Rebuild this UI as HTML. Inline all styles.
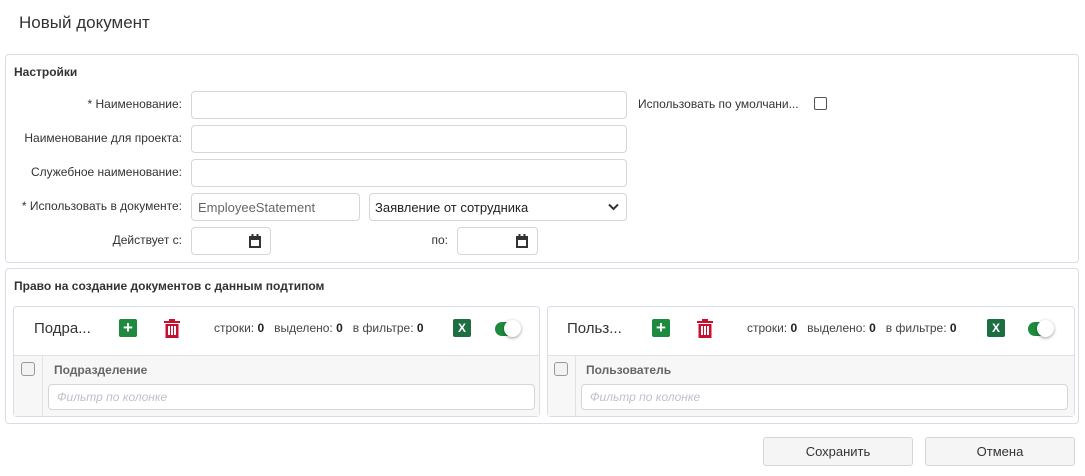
<!DOCTYPE html>
<html><head><meta charset="utf-8"><style>
*{box-sizing:border-box;margin:0;padding:0}
body{width:1085px;height:476px;background:#fff;font-family:"Liberation Sans","Noto Sans CJK SC",sans-serif;color:#333;position:relative;overflow:hidden;font-size:12px}
.a{position:absolute}
.box{position:absolute;border:1px solid #dcdce6;border-radius:4px}
.lbl{position:absolute;text-align:right;width:180px;left:2px;font-size:12px;color:#333}
.inp{position:absolute;border:1px solid #d6d6d6;border-radius:4px;height:28px;background:#fff}
.sec{font-weight:bold;font-size:12px;color:#333}
.btn{position:absolute;width:18px;height:18px;border-radius:2px;color:#fff;text-align:center;font-weight:bold}
.stats{position:absolute;font-size:12px;color:#444;white-space:nowrap}
.stats b{color:#222}
.tog{position:absolute;width:25px;height:14px;border-radius:7px;background:#1e8a3e}
.tog:after{content:"";position:absolute;right:-1px;top:-2px;width:17px;height:17px;border-radius:50%;background:#fff;box-shadow:0 1px 3px rgba(0,0,0,.4)}
.thead{position:absolute;background:#f7f7f7;border-top:1px solid #e2e2e2}
.cb{position:absolute;width:14px;height:14px;border:1px solid #999;border-radius:3px;background:#f2f2f2}
.fbtn{position:absolute;width:150px;height:29px;border:1px solid #d6d6d6;border-radius:3px;background:#f5f5f5;text-align:center;line-height:27px;font-size:13px;color:#333}
</style></head><body>
<div class="a" style="left:19px;top:13px;font-size:17px;color:#333">Новый документ</div>

<div class="box" style="left:5px;top:54px;width:1074px;height:209px"></div>
<div class="a sec" style="left:14px;top:65px">Настройки</div>
<div class="lbl" style="top:97px">* Наименование:</div>
<div class="inp" style="left:191px;top:91px;width:436px"></div>
<div class="lbl" style="top:131px">Наименование для проекта:</div>
<div class="inp" style="left:191px;top:125px;width:436px"></div>
<div class="lbl" style="top:165px">Служебное наименование:</div>
<div class="inp" style="left:191px;top:159px;width:436px"></div>
<div class="lbl" style="top:199px">* Использовать в документе:</div>
<div class="inp" style="left:191px;top:193px;width:169px;color:#666;font-size:13px;padding:6px 0 0 6px">EmployeeStatement</div>
<div class="inp" style="left:369px;top:193px;width:258px;color:#222;font-size:13px;padding:6px 0 0 5px">Заявление от сотрудника
<svg class="a" style="left:238px;top:9px" width="11" height="8" viewBox="0 0 11 8"><path d="M1 1.5l4.5 4.5 4.5-4.5" stroke="#333" stroke-width="2" fill="none"/></svg></div>
<div class="lbl" style="top:233px">Действует с:</div>
<div class="inp" style="left:191px;top:227px;width:80px"><svg class="a" style="left:57px;top:6px" width="12" height="14" viewBox="0 0 12 14"><rect x="1" y="3" width="10" height="10" fill="none" stroke="#333" stroke-width="2"/><rect x="1" y="3" width="10" height="3" fill="#333"/><rect x="2.5" y="0" width="2" height="4" fill="#333"/><rect x="7.5" y="0" width="2" height="4" fill="#333"/></svg></div>
<div class="a" style="left:430px;top:233px;width:18px;text-align:right;left:430px">по:</div>
<div class="inp" style="left:457px;top:227px;width:81px"><svg class="a" style="left:58px;top:6px" width="12" height="14" viewBox="0 0 12 14"><rect x="1" y="3" width="10" height="10" fill="none" stroke="#333" stroke-width="2"/><rect x="1" y="3" width="10" height="3" fill="#333"/><rect x="2.5" y="0" width="2" height="4" fill="#333"/><rect x="7.5" y="0" width="2" height="4" fill="#333"/></svg></div>
<div class="a" style="left:638px;top:97px">Использовать по умолчани...</div>
<div class="a" style="left:814px;top:97px;width:13px;height:13px;border:1px solid #555;border-radius:2px"></div>

<div class="box" style="left:5px;top:268px;width:1074px;height:156px"></div>
<div class="a sec" style="left:14px;top:279px">Право на создание документов с данным подтипом</div>

<!-- left panel -->
<div class="box" style="left:13px;top:306px;width:527px;height:111px"></div>
<div class="a" style="left:34px;top:320px;font-size:15px">Подра...</div>
<div class="btn" style="left:119px;top:319px;background:#1e8a3e;font-size:17px;line-height:18px">+</div>
<svg class="a" style="left:164px;top:319px" width="16" height="19" viewBox="0 0 16 19"><rect x="0" y="2" width="16" height="2" fill="#c8102e"/><rect x="5" y="0" width="6" height="2" fill="#c8102e"/><rect x="1.5" y="5" width="13" height="14" fill="#c8102e"/><rect x="4" y="7" width="2" height="9" fill="#fff"/><rect x="7" y="7" width="2" height="9" fill="#fff"/><rect x="10" y="7" width="2" height="9" fill="#fff"/></svg>
<div class="stats" style="left:214px;top:321px">строки: <b>0</b>&nbsp;&nbsp;&nbsp;выделено: <b>0</b>&nbsp;&nbsp;&nbsp;в фильтре: <b>0</b></div>
<div class="btn" style="left:453px;top:319px;background:#1d6f42;font-size:12px;line-height:19px">X</div>
<div class="tog" style="left:495px;top:322px"></div>
<div class="thead" style="left:14px;top:355px;width:525px;height:61px"></div>
<div class="a" style="left:42px;top:356px;width:1px;height:60px;background:#e2e2e2"></div>
<div class="cb" style="left:21px;top:362px"></div>
<div class="a" style="left:54px;top:363px;font-weight:bold;color:#666">Подразделение</div>
<div class="inp" style="left:48px;top:384px;width:487px;height:26px;color:#c0c0cc;font-style:italic;padding:5px 0 0 8px">Фильтр по колонке</div>

<!-- right panel -->
<div class="box" style="left:547px;top:306px;width:528px;height:111px"></div>
<div class="a" style="left:567px;top:320px;font-size:15px">Польз...</div>
<div class="btn" style="left:652px;top:319px;background:#1e8a3e;font-size:17px;line-height:18px">+</div>
<svg class="a" style="left:697px;top:319px" width="16" height="19" viewBox="0 0 16 19"><rect x="0" y="2" width="16" height="2" fill="#c8102e"/><rect x="5" y="0" width="6" height="2" fill="#c8102e"/><rect x="1.5" y="5" width="13" height="14" fill="#c8102e"/><rect x="4" y="7" width="2" height="9" fill="#fff"/><rect x="7" y="7" width="2" height="9" fill="#fff"/><rect x="10" y="7" width="2" height="9" fill="#fff"/></svg>
<div class="stats" style="left:747px;top:321px">строки: <b>0</b>&nbsp;&nbsp;&nbsp;выделено: <b>0</b>&nbsp;&nbsp;&nbsp;в фильтре: <b>0</b></div>
<div class="btn" style="left:987px;top:319px;background:#1d6f42;font-size:12px;line-height:19px">X</div>
<div class="tog" style="left:1028px;top:322px"></div>
<div class="thead" style="left:548px;top:355px;width:526px;height:61px"></div>
<div class="a" style="left:575px;top:356px;width:1px;height:60px;background:#e2e2e2"></div>
<div class="cb" style="left:554px;top:362px"></div>
<div class="a" style="left:586px;top:363px;font-weight:bold;color:#666">Пользователь</div>
<div class="inp" style="left:581px;top:384px;width:487px;height:26px;color:#c0c0cc;font-style:italic;padding:5px 0 0 8px">Фильтр по колонке</div>

<div class="fbtn" style="left:763px;top:437px">Сохранить</div>
<div class="fbtn" style="left:925px;top:437px">Отмена</div>
</body></html>
